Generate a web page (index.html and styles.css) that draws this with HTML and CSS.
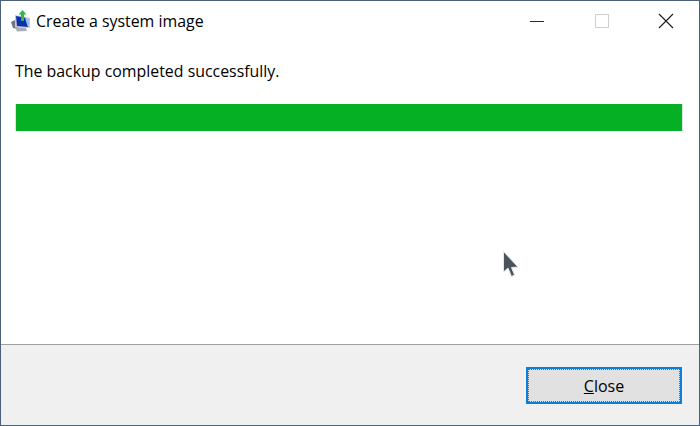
FILE: index.html
```html
<!DOCTYPE html>
<html lang="en">
<head>
  <meta charset="UTF-8">
  <title>Create a system image</title>
  <link rel="stylesheet" href="styles.css">
</head>
<body>
  <div class="window">
    <div class="titlebar">
      <svg class="app-icon" width="20" height="22" viewBox="0 0 20 22">
        <path d="M0 12 L6 9 L7 19 L2 18 Z" fill="#6d7680"/>
        <path d="M4 5 L19 8 L19 18 L4 17 Z" fill="#c2cad4"/>
        <path d="M5 6 L15 8 L17 17 L6 16 Z" fill="#0b2fb0"/>
        <path d="M14 8 L18 9 L18 16 L16.5 16 Z" fill="#9fc0ea"/>
        <path d="M4 17 L15 18 L16 21 L6 21.5 Z" fill="#a9afb7"/>
        <path d="M10 11 L10 4.5 L7.5 4.5 L11.5 0 L15.5 4.5 L13 4.5 L13 11 Z" fill="#2fb84a"/>
      </svg>
      <span class="title">Create a system image</span>
      <div class="caption-buttons">
        <svg class="caption-btn" width="16" height="16" viewBox="0 0 16 16"><path d="M1 8.5 H15" stroke="#2b2b2b" stroke-width="1"/></svg>
        <svg class="caption-btn" width="16" height="16" viewBox="0 0 16 16"><rect x="1.5" y="1.5" width="13" height="13" fill="none" stroke="#cfcfcf" stroke-width="1"/></svg>
        <svg class="caption-btn" width="16" height="16" viewBox="0 0 16 16"><path d="M1 1 L15 15 M15 1 L1 15" stroke="#1a1a1a" stroke-width="1.1"/></svg>
      </div>
    </div>
    <div class="content">
      <p class="message">The backup completed successfully.</p>
      <div class="progress"></div>
    </div>
    <div class="footer">
      <button class="close-btn"><u>C</u>lose</button>
    </div>
  </div>
  <svg class="pointer" width="20" height="30" viewBox="0 0 20 30">
    <path d="M3.5 1.5 L3.5 22 L8 18 L11.5 26.5 L14.5 25 L11.5 17.5 L18 17 Z" fill="#4a535e" stroke="#e4e6e8" stroke-width="1"/>
  </svg>
</body>
</html>
```

FILE: styles.css
```css
html, body {
  margin: 0;
  padding: 0;
  width: 100%;
  height: 100%;
  overflow: hidden;
}
body {
  position: relative;
  font-family: "Open Sans", "Noto Sans", sans-serif;
  color: #000;
}
.window {
  box-sizing: border-box;
  height: 426px;
  display: flex;
  flex-direction: column;
  background: #fff;
  border: 1px solid #4d6079;
}
.titlebar {
  display: flex;
  align-items: center;
  height: 40px;
  padding-left: 10px;
  flex-shrink: 0;
}
.app-icon {
  margin-right: 5px;
}
.title {
  font-size: 15.9px;
  margin-bottom: 1px;
}
.caption-buttons {
  margin-left: auto;
  display: flex;
  gap: 48px;
  padding-right: 25px;
}
.caption-btn:nth-child(1) {
  margin-right: 1px;
}
.content {
  flex: 1;
  padding: 0 17px 0 15px;
}
.message {
  margin: 19px 0 22px -1px;
  font-size: 15.9px;
  line-height: 22px;
}
.progress {
  height: 27px;
  background: #06b025;
  box-shadow: 1px 0 0 #dfe6df, -1px 0 0 #dfe6df;
}
.footer {
  height: 81px;
  box-sizing: border-box;
  flex-shrink: 0;
  display: flex;
  justify-content: flex-end;
  padding: 22px 17px 0 0;
  background: #f0f0f0;
  border-top: 1px solid #a0a0a0;
}
.close-btn {
  box-sizing: border-box;
  width: 156px;
  height: 37px;
  background: #e1e1e1;
  border: 2px solid #0a7fdc;
  outline: 1px dotted #666;
  outline-offset: -3px;
  font-family: inherit;
  font-size: 16px;
  color: #000;
  padding: 0;
}
.pointer {
  position: absolute;
  left: 500px;
  top: 250px;
}
```
